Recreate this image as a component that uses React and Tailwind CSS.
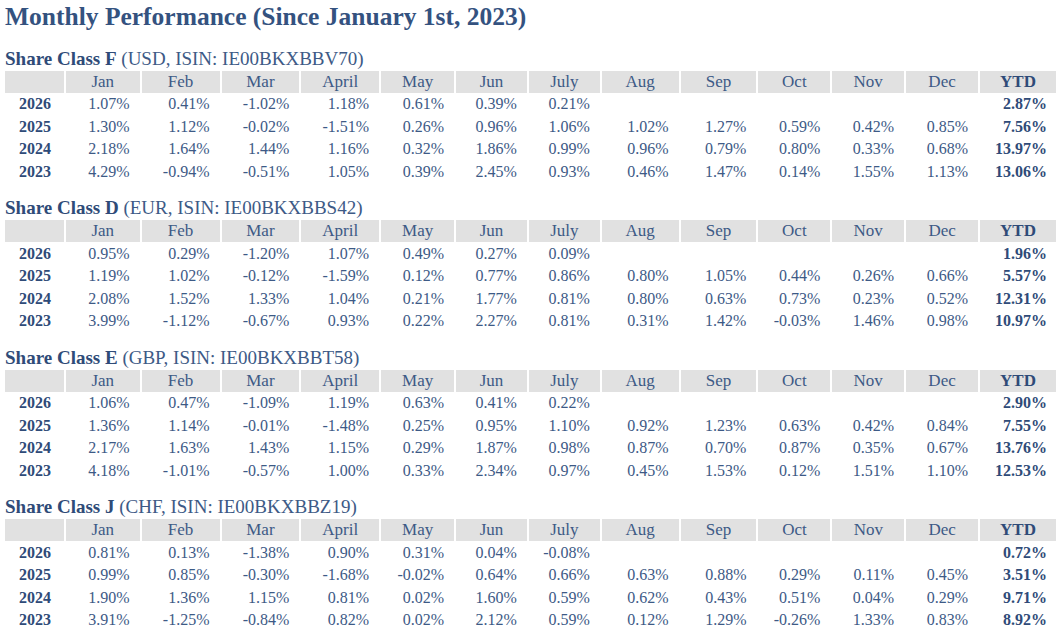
import React from "react";

const months = ["Jan", "Feb", "Mar", "April", "May", "Jun", "July", "Aug", "Sep", "Oct", "Nov", "Dec"];

const colWidths = [
  "w-[60px]", "w-[76px]", "w-[80px]", "w-[80px]", "w-[80px]", "w-[75px]", "w-[73px]",
  "w-[73px]", "w-[79px]", "w-[78px]", "w-[74px]", "w-[74px]", "w-[74px]", "w-[77px]",
];

const shareClasses = [
  {
    name: "Share Class F",
    info: "(USD, ISIN: IE00BKXBBV70)",
    rows: [
      ["2026", ["1.07%", "0.41%", "-1.02%", "1.18%", "0.61%", "0.39%", "0.21%", "", "", "", "", ""], "2.87%"],
      ["2025", ["1.30%", "1.12%", "-0.02%", "-1.51%", "0.26%", "0.96%", "1.06%", "1.02%", "1.27%", "0.59%", "0.42%", "0.85%"], "7.56%"],
      ["2024", ["2.18%", "1.64%", "1.44%", "1.16%", "0.32%", "1.86%", "0.99%", "0.96%", "0.79%", "0.80%", "0.33%", "0.68%"], "13.97%"],
      ["2023", ["4.29%", "-0.94%", "-0.51%", "1.05%", "0.39%", "2.45%", "0.93%", "0.46%", "1.47%", "0.14%", "1.55%", "1.13%"], "13.06%"],
    ],
  },
  {
    name: "Share Class D",
    info: "(EUR, ISIN: IE00BKXBBS42)",
    rows: [
      ["2026", ["0.95%", "0.29%", "-1.20%", "1.07%", "0.49%", "0.27%", "0.09%", "", "", "", "", ""], "1.96%"],
      ["2025", ["1.19%", "1.02%", "-0.12%", "-1.59%", "0.12%", "0.77%", "0.86%", "0.80%", "1.05%", "0.44%", "0.26%", "0.66%"], "5.57%"],
      ["2024", ["2.08%", "1.52%", "1.33%", "1.04%", "0.21%", "1.77%", "0.81%", "0.80%", "0.63%", "0.73%", "0.23%", "0.52%"], "12.31%"],
      ["2023", ["3.99%", "-1.12%", "-0.67%", "0.93%", "0.22%", "2.27%", "0.81%", "0.31%", "1.42%", "-0.03%", "1.46%", "0.98%"], "10.97%"],
    ],
  },
  {
    name: "Share Class E",
    info: "(GBP, ISIN: IE00BKXBBT58)",
    rows: [
      ["2026", ["1.06%", "0.47%", "-1.09%", "1.19%", "0.63%", "0.41%", "0.22%", "", "", "", "", ""], "2.90%"],
      ["2025", ["1.36%", "1.14%", "-0.01%", "-1.48%", "0.25%", "0.95%", "1.10%", "0.92%", "1.23%", "0.63%", "0.42%", "0.84%"], "7.55%"],
      ["2024", ["2.17%", "1.63%", "1.43%", "1.15%", "0.29%", "1.87%", "0.98%", "0.87%", "0.70%", "0.87%", "0.35%", "0.67%"], "13.76%"],
      ["2023", ["4.18%", "-1.01%", "-0.57%", "1.00%", "0.33%", "2.34%", "0.97%", "0.45%", "1.53%", "0.12%", "1.51%", "1.10%"], "12.53%"],
    ],
  },
  {
    name: "Share Class J",
    info: "(CHF, ISIN: IE00BKXBBZ19)",
    rows: [
      ["2026", ["0.81%", "0.13%", "-1.38%", "0.90%", "0.31%", "0.04%", "-0.08%", "", "", "", "", ""], "0.72%"],
      ["2025", ["0.99%", "0.85%", "-0.30%", "-1.68%", "-0.02%", "0.64%", "0.66%", "0.63%", "0.88%", "0.29%", "0.11%", "0.45%"], "3.51%"],
      ["2024", ["1.90%", "1.36%", "1.15%", "0.81%", "0.02%", "1.60%", "0.59%", "0.62%", "0.43%", "0.51%", "0.04%", "0.29%"], "9.71%"],
      ["2023", ["3.91%", "-1.25%", "-0.84%", "0.82%", "0.02%", "2.12%", "0.59%", "0.12%", "1.29%", "-0.26%", "1.33%", "0.83%"], "8.92%"],
    ],
  },
];

const ShareTable = ({ share }) => {
  return (
    <section className="mt-[13.5px]">
      <h2 className="h-[24px] leading-[24px] text-[19px] whitespace-nowrap">
        <span className="font-bold text-[#2f4b78]">{share.name}</span>{" "}
        <span className="text-[#3d5a86]">{share.info}</span>
      </h2>
      <table className="table-fixed border-collapse text-[16px] leading-[20px] text-[#3d5a86]">
        <colgroup>
          {colWidths.map((w, i) => (
            <col key={i} className={w} />
          ))}
        </colgroup>
        <thead>
          <tr className="h-[22px] bg-[#e1e1e1] text-[17px]">
            <th className="p-0"></th>
            {months.map((m) => (
              <th key={m} className="p-0 font-normal text-center border-l-2 border-white">{m}</th>
            ))}
            <th className="p-0 font-bold text-center border-l-2 border-white text-[#2f4b78]">YTD</th>
          </tr>
        </thead>
        <tbody>
          {share.rows.map(([year, vals, ytd]) => (
            <tr key={year} className="h-[22.5px]">
              <td className="p-0 pt-px text-center font-bold text-[#2f4b78]">{year}</td>
              {vals.map((v, i) => (
                <td key={i} className="p-0 pt-px pr-[11px] text-right">{v}</td>
              ))}
              <td className="p-0 pt-px pr-[9px] text-right font-bold text-[#2f4b78]">{ytd}</td>
            </tr>
          ))}
        </tbody>
      </table>
    </section>
  );
};

const App = () => {
  return (
    <div className="w-[1061px] h-[640px] overflow-hidden bg-white px-[5px] pt-px font-['Liberation_Serif','DejaVu_Serif',serif]">
      <h1 className="h-[32px] leading-[32px] text-[25.5px] font-bold text-[#34527f] whitespace-nowrap">
        Monthly Performance (Since January 1st, 2023)
      </h1>
      {shareClasses.map((s) => (
        <ShareTable key={s.name} share={s} />
      ))}
    </div>
  );
};

export default App;
